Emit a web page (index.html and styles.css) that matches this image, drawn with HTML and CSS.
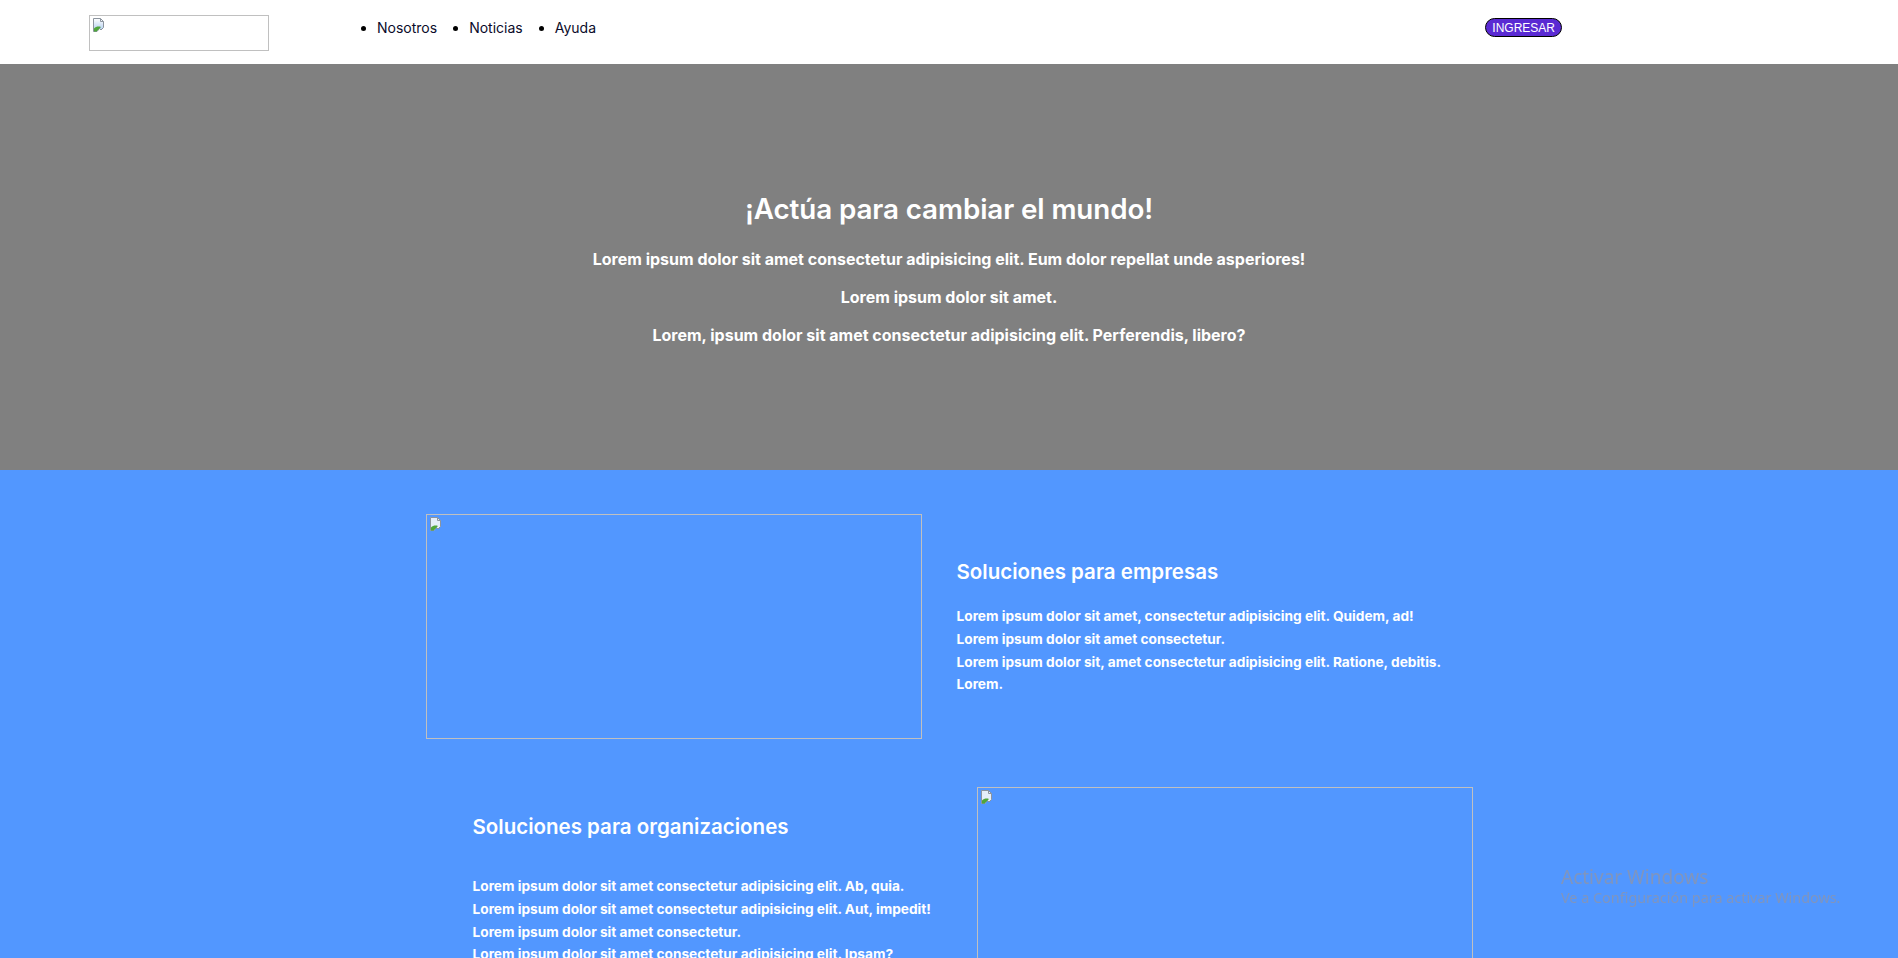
FILE: index.html
```html
<!DOCTYPE html>
<html lang="es">
<head>
<meta charset="utf-8">
<title>Actúa para cambiar el mundo</title>
<link rel="stylesheet" href="styles.css">
</head>
<body>
<header class="site-header">
  <div class="logo broken-img">
    <svg class="broken-icon" width="16" height="16" viewBox="0 0 16 16" aria-hidden="true">
      <defs>
        <linearGradient id="sky1" x1="0" y1="0" x2="0" y2="1">
          <stop offset="0" stop-color="#ffffff"/>
          <stop offset="1" stop-color="#a9c8ee"/>
        </linearGradient>
      </defs>
      <path d="M2.5 1.5h7l3 3v6l-2.5 2.5-1.5-1.5-2.5 3H2.5z" fill="url(#sky1)" stroke="#8c949e"/>
      <path d="M9.5 1.5v3h3" fill="none" stroke="#8c949e"/>
      <path d="M3 14.5v-3c2-2 4.5-2.5 7-1.5l-4.5 4.5z" fill="#4fa63a"/>
    </svg>
  </div>
  <nav class="main-nav">
    <ul>
      <li><a href="#">Nosotros</a></li>
      <li><a href="#">Noticias</a></li>
      <li><a href="#">Ayuda</a></li>
    </ul>
  </nav>
  <button class="btn-login" type="button">INGRESAR</button>
</header>

<section class="hero">
  <h1>¡Actúa para cambiar el mundo!</h1>
  <p>Lorem ipsum dolor sit amet consectetur adipisicing elit. Eum dolor repellat unde asperiores!</p>
  <p>Lorem ipsum dolor sit amet.</p>
  <p>Lorem, ipsum dolor sit amet consectetur adipisicing elit. Perferendis, libero?</p>
</section>

<section class="solutions">
  <div class="container">
    <div class="row row-empresas">
      <div class="img-frame broken-img">
        <svg class="broken-icon" width="16" height="16" viewBox="0 0 16 16" aria-hidden="true">
          <path d="M2.5 1.5h7l3 3v6l-2.5 2.5-1.5-1.5-2.5 3H2.5z" fill="#e4eefa" stroke="#8c949e"/>
          <path d="M9.5 1.5v3h3" fill="none" stroke="#8c949e"/>
          <path d="M3 14.5v-3c2-2 4.5-2.5 7-1.5l-4.5 4.5z" fill="#4fa63a"/>
        </svg>
      </div>
      <div class="row-text">
        <h2>Soluciones para empresas</h2>
        <p>Lorem ipsum dolor sit amet, consectetur adipisicing elit. Quidem, ad!<br>
        Lorem ipsum dolor sit amet consectetur.<br>
        Lorem ipsum dolor sit, amet consectetur adipisicing elit. Ratione, debitis.<br>
        Lorem.</p>
      </div>
    </div>

    <div class="row row-org">
      <div class="row-text">
        <h2>Soluciones para organizaciones</h2>
        <p>Lorem ipsum dolor sit amet consectetur adipisicing elit. Ab, quia.<br>
        Lorem ipsum dolor sit amet consectetur adipisicing elit. Aut, impedit!<br>
        Lorem ipsum dolor sit amet consectetur.<br>
        Lorem ipsum dolor sit amet consectetur adipisicing elit. Ipsam?<br>
        Lorem ipsum dolor sit amet.</p>
      </div>
      <div class="img-frame broken-img">
        <svg class="broken-icon" width="16" height="16" viewBox="0 0 16 16" aria-hidden="true">
          <path d="M2.5 1.5h7l3 3v6l-2.5 2.5-1.5-1.5-2.5 3H2.5z" fill="#e4eefa" stroke="#8c949e"/>
          <path d="M9.5 1.5v3h3" fill="none" stroke="#8c949e"/>
          <path d="M3 14.5v-3c2-2 4.5-2.5 7-1.5l-4.5 4.5z" fill="#4fa63a"/>
        </svg>
      </div>
    </div>
  </div>
</section>

<div class="win-watermark">
  <div class="wm-title">Activar Windows</div>
  <div class="wm-sub">Ve a Configuración para activar Windows.</div>
</div>
</body>
</html>
```

FILE: styles.css
```css
html, body {
  margin: 0;
  padding: 0;
}

body {
  font-family: Inter, "Liberation Sans", sans-serif;
  background: #5297ff;
}

/* ---------- header ---------- */
.site-header {
  height: 64px;
  display: flex;
  align-items: flex-start;
  padding-left: 89px;
  background: #ffffff;
  box-sizing: border-box;
}

.broken-img {
  box-sizing: border-box;
  border: 1px solid #c0c0c0;
  padding: 1px;
}

.broken-icon {
  display: block;
}

.logo {
  width: 180px;
  height: 36px;
  margin-top: 15px;
  flex: none;
}

.main-nav ul {
  display: flex;
  gap: 32px;
  margin: 19px 0 0 108px;
  padding: 0;
}

.main-nav li {
  font-size: 14px;
  line-height: 17px;
  color: #000;
}

.main-nav a {
  color: #0b0b2a;
  text-decoration: none;
}

.btn-login {
  margin: 18px 336px 0 auto;
  height: 19px;
  padding: 0 6px;
  font-family: "Liberation Sans", Arial, sans-serif;
  font-size: 12px;
  line-height: 16px;
  color: #ffffff;
  background: #5a2ad3;
  border: 1px solid #000000;
  border-radius: 10px;
}

/* ---------- hero ---------- */
.hero {
  height: 406px;
  box-sizing: border-box;
  padding-top: 130px;
  background: #808080;
  color: #ffffff;
  text-align: center;
}

.hero h1 {
  margin: 0 0 25px;
  font-size: 27.8px;
  line-height: 31px;
  font-weight: 600;
  letter-spacing: -0.1px;
}

.hero p {
  margin: 0 0 20px;
  font-size: 16px;
  line-height: 18px;
  font-weight: 700;
}

/* ---------- solutions ---------- */
.solutions {
  background: #5297ff;
  padding: 44px 0 60px;
  color: #ffffff;
}

.container {
  width: 1047px;
  margin: 0 auto;
}

.row {
  display: grid;
  align-items: center;
}

.row-empresas {
  grid-template-columns: 496px 1fr;
  column-gap: 35px;
}

.row-org {
  grid-template-columns: 1fr 496px;
  padding-left: 47px;
  margin-top: 48px;
}

.row-org .row-text {
  padding-top: 2px;
}

.img-frame {
  height: 225px;
}

.row-text h2 {
  margin: 0 0 18px;
  font-size: 20.5px;
  line-height: 30px;
  font-weight: 600;
}

.row-org .row-text h2 {
  margin-bottom: 33px;
}

.row-text p {
  margin: 0;
  font-size: 13.7px;
  line-height: 22.7px;
  font-weight: 700;
}

/* ---------- windows watermark overlay ---------- */
.win-watermark {
  position: fixed;
  left: 1561px;
  top: 865px;
  color: #8095bd;
  font-family: "Noto Sans", "Open Sans", sans-serif;
  pointer-events: none;
}

.wm-title {
  font-size: 19px;
  line-height: 24px;
}

.wm-sub {
  font-size: 14.4px;
  line-height: 18px;
}
```
